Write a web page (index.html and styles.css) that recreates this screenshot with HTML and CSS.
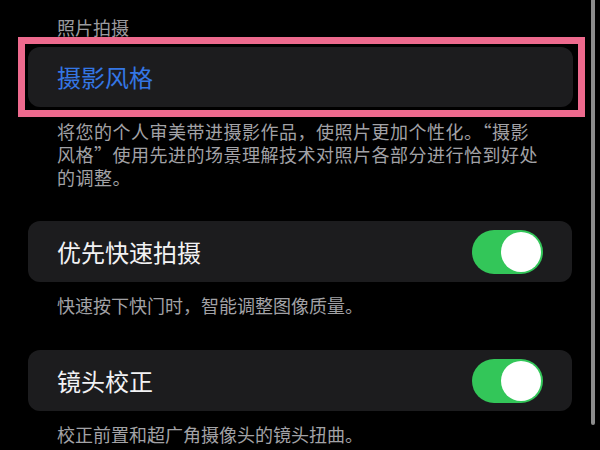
FILE: index.html
```html
<!DOCTYPE html>
<html lang="zh-CN">
<head>
<meta charset="utf-8">
<link rel="stylesheet" href="styles.css">
</head>
<body>
<div class="page">
  <div class="section-title">照片拍摄</div>
  <div class="highlight">
    <div class="card">
      <span class="card-label link">摄影风格</span>
    </div>
  </div>
  <p class="desc first">将您的个人审美带进摄影作品，使照片更加个性化。“摄影风格”使用先进的场景理解技术对照片各部分进行恰到好处的调整。</p>

  <div class="card card-gap">
    <span class="card-label">优先快速拍摄</span>
    <span class="toggle"><span class="knob"></span></span>
  </div>
  <p class="desc">快速按下快门时，智能调整图像质量。</p>

  <div class="card card-gap">
    <span class="card-label">镜头校正</span>
    <span class="toggle"><span class="knob"></span></span>
  </div>
  <p class="desc">校正前置和超广角摄像头的镜头扭曲。</p>

  <div class="scrollbar"></div>
</div>
</body>
</html>
```

FILE: styles.css
```css
html, body {
  margin: 0;
  padding: 0;
  background: #000;
}
body {
  width: 600px;
  height: 450px;
  overflow: hidden;
  font-family: "Noto Sans CJK SC", "Noto Sans", sans-serif;
}
.page {
  position: relative;
  display: flex;
  flex-direction: column;
  width: 600px;
  height: 450px;
}
.section-title {
  padding: 15px 0 0 57px;
  height: 22px;
  line-height: 24px;
  font-size: 18px;
  color: #9b9b9f;
}
.highlight {
  margin-left: 18px;
  width: 545px;
  border: 7px solid #ee6a8e;
  padding: 3px 5px 3px 3px;
}
.card {
  display: flex;
  align-items: center;
  justify-content: space-between;
  height: 60px;
  background: #1c1c1e;
  border-radius: 12px;
  padding: 0 29px 0 29px;
}
.card-gap {
  margin: 0 28px 0 28px;
  height: 61px;
}
.card-label {
  font-size: 24px;
  color: #f2f2f4;
  line-height: 30px;
}
.card-label.link {
  color: #3476e4;
}
.desc {
  margin: 12px 0 0 0;
  padding-left: 57px;
  width: 480px;
  font-size: 18px;
  line-height: 23px;
  color: #a2a2a6;
}
.desc.first {
  width: 486px;
  letter-spacing: 0.5px;
  margin-top: 3px;
  margin-bottom: 32px;
}
.desc + .card-gap {
  margin-top: 33px;
}
.desc.first + .card-gap {
  margin-top: 0;
}
.toggle {
  display: flex;
  align-items: center;
  justify-content: flex-end;
  width: 71px;
  height: 44px;
  padding: 0 2px;
  box-sizing: border-box;
  border-radius: 22px;
  background: #33c659;
}
.knob {
  width: 40px;
  height: 40px;
  border-radius: 50%;
  background: #fff;
}
.scrollbar {
  position: absolute;
  left: 591px;
  top: 0;
  width: 4px;
  height: 425px;
  border-radius: 0 0 2px 2px;
  background: #8c8c8c;
}
```
